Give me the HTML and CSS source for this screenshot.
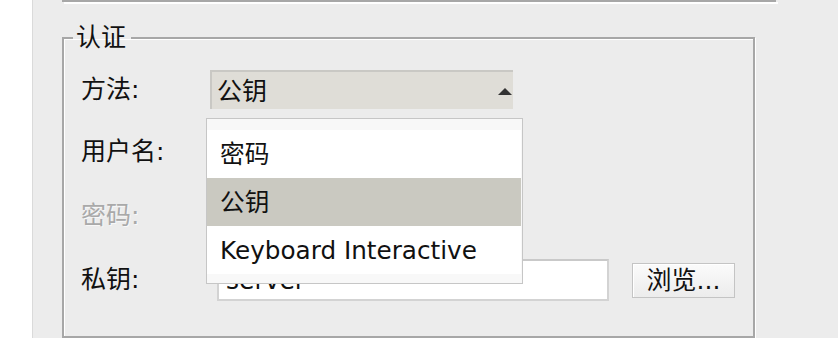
FILE: index.html
```html
<!DOCTYPE html>
<html lang="zh-CN">
<head>
<meta charset="utf-8">
<title>认证</title>
<link rel="stylesheet" href="styles.css">
</head>
<body>
<div class="page">
  <div class="gutter"></div>
  <div class="main">
    <div class="upper"></div>
    <fieldset class="group">
      <legend class="legend">认证</legend>
      <div class="form">
        <label class="label">方法:</label>
        <div class="cell">
          <div class="combo-wrap">
            <div class="combo">
              <span class="combo-text">公钥</span>
              <svg class="arrow" width="14" height="8" viewBox="0 0 14 8"><polygon points="0,8 7,1 14,8" fill="#333333"/></svg>
            </div>
            <ul class="popup">
              <li class="item">密码</li>
              <li class="item selected">公钥</li>
              <li class="item">Keyboard Interactive</li>
            </ul>
          </div>
        </div>

        <label class="label">用户名:</label>
        <div class="cell"><div class="field hidden-field"></div></div>

        <label class="label disabled">密码:</label>
        <div class="cell"><div class="field hidden-field"></div></div>

        <label class="label">私钥:</label>
        <div class="cell key-row">
          <div class="field key-field">server</div>
          <button class="btn">浏览...</button>
        </div>
      </div>
    </fieldset>
  </div>
</div>
</body>
</html>
```

FILE: styles.css
```css
* { box-sizing: border-box; }

html, body {
  margin: 0;
  padding: 0;
  background: #ffffff;
}

body {
  font-family: "DejaVu Sans", "Noto Sans CJK SC", sans-serif;
  font-size: 25px;
  color: #111;
}

.page {
  display: flex;
  width: 838px;
  height: 338px;
  overflow: hidden;
}

.gutter {
  width: 33px;
  flex: none;
  background: #ffffff;
  border-right: 1px solid #dadada;
}

.main {
  flex: 1;
  background: #ececec;
  padding-left: 29px;
}

.upper {
  width: 714px;
  height: 2px;
  background: #a7a7a7;
  box-shadow: 2px 2px 0 #ffffff;
}

.group {
  margin: 22px 0 0 0;
  padding: 0;
  width: 693px;
  height: 314px;
  border: 2px solid #a7a7a7;
  box-shadow: inset 1px 1px 0 #ffffff, 1px 1px 0 #ffffff;
  min-width: 0;
}

.legend {
  margin-left: 9px;
  padding: 0 5px 0 3px;
  line-height: 28px;
  font-size: 25px;
  color: #111;
}

.form {
  display: grid;
  grid-template-columns: 130px 1fr;
  grid-template-rows: 39px 42px 42px 42px;
  row-gap: 22px;
  padding: 18px 0 0 16px;
}

.label {
  align-self: center;
  line-height: 28px;
  padding-left: 1px;
}

.label.disabled {
  color: #a9a9a9;
  text-shadow: 1px 1px 0 #f8f8f8;
}

.cell {
  display: flex;
  align-items: center;
}

.combo-wrap {
  position: relative;
  width: 303px;
  height: 39px;
}

.combo {
  display: flex;
  align-items: center;
  justify-content: space-between;
  height: 39px;
  padding: 3px 1px 0 5px;
  background: #dfddd7;
  border-top: 2px solid #c9c8c4;
  border-left: 2px solid #c9c8c4;
  line-height: 28px;
}

.arrow {
  display: block;
  margin-bottom: 2px;
}

.popup {
  position: absolute;
  top: 48px;
  left: -4px;
  width: 317px;
  height: 166px;
  margin: 0;
  padding: 11px 1px 9px 0;
  list-style: none;
  background: #f8f8f8;
  border: 1px solid #c6c6c6;
  z-index: 2;
}

.item {
  height: 48px;
  line-height: 48px;
  padding: 1px 0 0 13px;
  font-size: 24.7px;
  background: #ffffff;
  color: #111;
  white-space: nowrap;
}

.item.selected {
  background: #cac9c1;
}

.field {
  height: 42px;
  background: #ffffff;
  border: 2px solid #d3d3d3;
  border-top-color: #c9c9c9;
  padding: 3px 0 0 7px;
  line-height: 34px;
}

.hidden-field {
  margin-left: 7px;
  width: 290px;
}

.key-row {
  gap: 23px;
}

.key-field {
  margin-left: 7px;
  width: 392px;
}

.btn {
  width: 103px;
  height: 35px;
  margin-top: 1px;
  padding: 0;
  font-family: inherit;
  font-size: 25px;
  line-height: 30px;
  color: #111;
  background: linear-gradient(#fbfbfb, #ececec);
  border: 1px solid #c4c4c4;
  box-shadow: inset 1px 1px 0 #ffffff;
}
```
